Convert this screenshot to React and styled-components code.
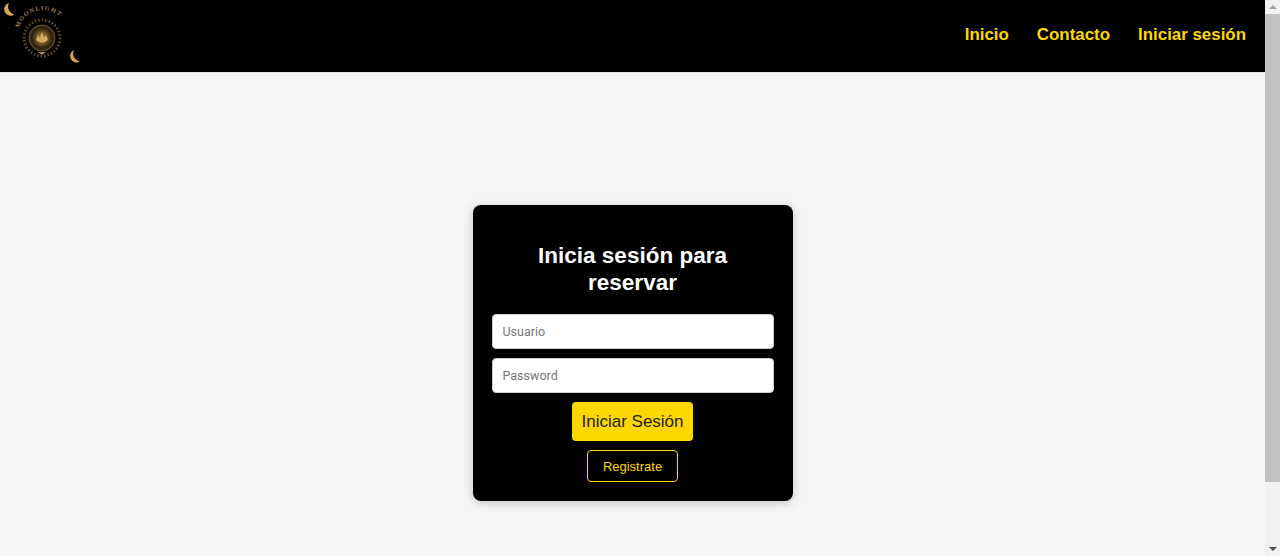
import styled, { createGlobalStyle } from "styled-components";

const GlobalStyle = createGlobalStyle`
  html, body {
    margin: 0;
    height: 100%;
    overflow: hidden;
  }
  body {
    font-family: "Liberation Sans", Arial, sans-serif;
    background: #f5f5f5;
  }
  * {
    box-sizing: border-box;
  }
`;

const Shell = styled.div`
  display: flex;
  height: 556px;
  overflow: hidden;
`;

const Page = styled.div`
  flex: 1;
  min-width: 0;
  background: #f5f5f5;
`;

const Header = styled.header`
  height: 73px;
  background: #000;
  display: flex;
  align-items: center;
  justify-content: space-between;
  padding: 0 19px 2px 0;
  border-bottom: 1px solid #e4e4e4;
`;

const Logo = styled.svg`
  width: 84px;
  height: 72px;
  align-self: flex-start;
  flex-shrink: 0;
`;

const Nav = styled.nav`
  display: flex;
  gap: 28px;
`;

const NavLink = styled.a`
  color: #ffd700;
  font-size: 16.9px;
  font-weight: bold;
  text-decoration: none;
`;

const Main = styled.main`
  display: flex;
  justify-content: center;
  padding-top: 132px;
`;

const Card = styled.form`
  width: 320px;
  height: 296px;
  background: #000;
  border-radius: 8px;
  padding: 38px 19px 0;
  display: flex;
  flex-direction: column;
  align-items: center;
  box-shadow: 0 2px 10px rgba(0, 0, 0, 0.2);
`;

const Title = styled.h2`
  margin: 0 0 18px;
  color: #fff;
  font-size: 22.5px;
  line-height: 26.5px;
  font-weight: bold;
  text-align: center;
  width: 240px;
`;

const Input = styled.input`
  width: 100%;
  height: 35px;
  margin-bottom: 9px;
  padding: 0 10px;
  border: 1px solid #ccc;
  border-radius: 4px;
  background: #fff;
  font-family: Roboto, sans-serif;
  font-size: 12.5px;
  outline: none;

  &::placeholder {
    color: #777;
  }
`;

const SubmitButton = styled.button`
  width: 121px;
  height: 39px;
  margin-bottom: 9px;
  border: none;
  border-radius: 4px;
  background: #ffd700;
  color: #222;
  font-family: "Liberation Sans", Arial, sans-serif;
  font-size: 17px;
  padding: 0;
`;

const RegisterLink = styled.a`
  width: 91px;
  height: 32px;
  display: flex;
  align-items: center;
  justify-content: center;
  border: 1px solid #ffd700;
  border-radius: 4px;
  color: #ffd700;
  font-size: 13px;
  text-decoration: none;
`;

const Scrollbar = styled.div`
  width: 15px;
  flex-shrink: 0;
  background: #f1f1f1;
  display: flex;
  flex-direction: column;
  align-items: center;
`;

const ScrollArrow = styled.div`
  height: 14px;
  width: 100%;
  display: flex;
  align-items: center;
  justify-content: center;

  &::before {
    content: "";
    border-left: 4px solid transparent;
    border-right: 4px solid transparent;
    ${(p) =>
      p.$down ? "border-top: 4px solid #505050;" : "border-bottom: 4px solid #a3a3a3;"}
  }
`;

const ScrollThumb = styled.div`
  width: 100%;
  height: 468px;
  background: #c1c1c1;
`;

const ScrollTrack = styled.div`
  flex: 1;
`;

const gold = "#d9a54a";

const MoonLogo = () => (
  <Logo viewBox="0 0 84 72">
    <defs>
      <path id="arc" d="M19 28 A25 25 0 0 1 67 28" />
      <radialGradient id="core">
        <stop offset="0" stopColor="#b98c40" />
        <stop offset="0.4" stopColor="#7a5c28" />
        <stop offset="0.8" stopColor="#2a1f0c" />
        <stop offset="1" stopColor="#4a3a1c" />
      </radialGradient>
    </defs>
    {/* moons */}
    <path d="M9 3 A6.5 6.5 0 1 0 14.5 14.5 A8 8 0 0 1 9 3 Z" fill={gold} />
    <path d="M74 50 A6.5 6.5 0 1 0 80 61.5 A8 8 0 0 1 74 50 Z" fill={gold} />
    <text fontFamily="Liberation Serif" fontSize="6.2" fontWeight="bold" fill="#a08450" letterSpacing="1.2">
      <textPath href="#arc">MOONLIGHT</textPath>
    </text>
    <circle cx="42" cy="38" r="18" fill="none" stroke="#5f4a24" strokeWidth="3" strokeDasharray="1.5 2" />
    <circle cx="42" cy="38" r="13" fill="url(#core)" stroke="#7a6034" strokeWidth="0.8" />
    <path d="M36 40 L38 35 L40 38 L42 32 L44 38 L46 35 L48 40 Q42 45 36 40 Z" fill="#d4ac62" />
    <path d="M38 52 h8 l-4 3 Z" fill="#a98a55" />
  </Logo>
);

const App = () => {
  return (
    <Shell>
      <GlobalStyle />
      <Page>
        <Header>
          <MoonLogo />
          <Nav>
            <NavLink href="#">Inicio</NavLink>
            <NavLink href="#">Contacto</NavLink>
            <NavLink href="#">Iniciar sesión</NavLink>
          </Nav>
        </Header>
        <Main>
          <Card onSubmit={(e) => e.preventDefault()}>
            <Title>Inicia sesión para reservar</Title>
            <Input placeholder="Usuario" />
            <Input placeholder="Password" type="password" />
            <SubmitButton>Iniciar Sesión</SubmitButton>
            <RegisterLink href="#">Registrate</RegisterLink>
          </Card>
        </Main>
      </Page>
      <Scrollbar>
        <ScrollArrow />
        <ScrollThumb />
        <ScrollTrack />
        <ScrollArrow $down />
      </Scrollbar>
    </Shell>
  );
};

export default App;
